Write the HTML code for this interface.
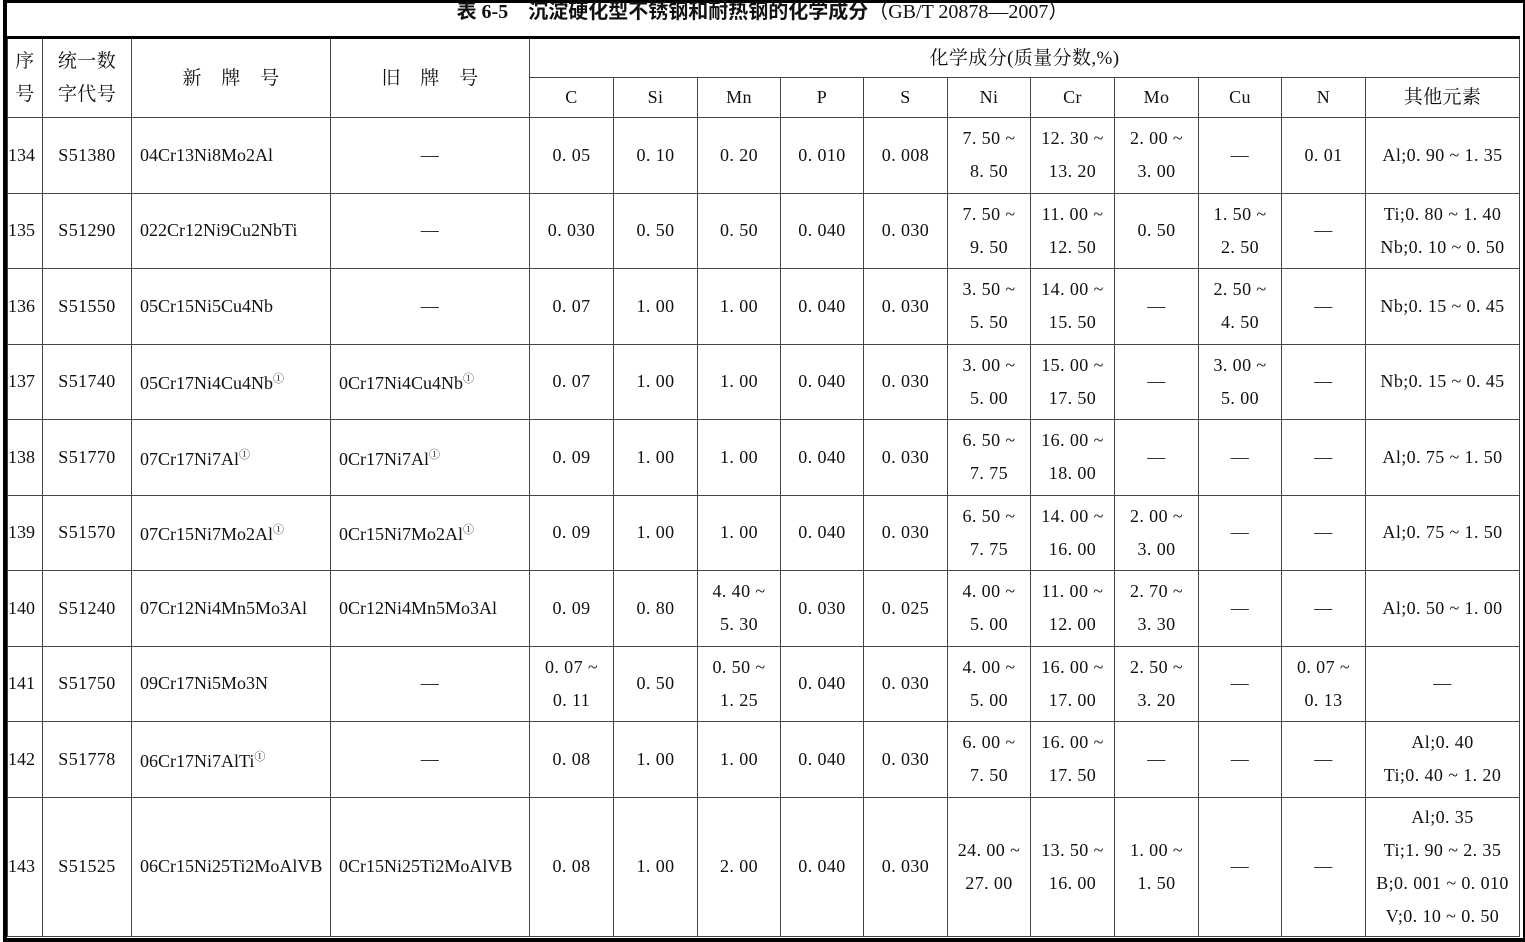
<!DOCTYPE html>
<html><head><meta charset="utf-8"><style>
body{margin:0;width:1525px;height:940px;background:#fff;overflow:hidden;position:relative;font-family:"Liberation Serif","Noto Serif CJK SC",serif;color:#111}
.frame{position:absolute;left:3px;top:0;width:1516px;height:935px;border-left:4px solid #000;border-right:4px solid #000;border-bottom:4px solid #000;border-top:3px solid #000}
.title{position:absolute;left:0;top:-3px;width:1525px;text-align:center;font-size:20px;font-weight:bold;font-family:"Liberation Serif","Noto Sans CJK SC",serif;line-height:30px}
.title span{font-weight:normal}
table{position:absolute;left:7px;top:36px;border-collapse:collapse;table-layout:fixed;font-size:18px;letter-spacing:0.4px}
td{border:1.5px solid #444;text-align:center;vertical-align:middle;padding:0;line-height:33px;white-space:nowrap}
tr.h1 td{height:38px}
tr.h2 td{height:39px}
tr.r td{height:74.5px}
tr.rl td{height:138px}
td.l{text-align:left;padding-left:8px;letter-spacing:0}
td.s{text-align:left;padding-left:0;letter-spacing:0}
td.c{font-size:19px}
table{border-top:3px solid #000}
sup{font-size:11px}
</style></head><body>
<div class="frame"></div>
<div class="title">表 6-5　沉淀硬化型不锈钢和耐热钢的化学成分<span>（GB/T 20878—2007）</span></div>
<table>
<colgroup><col style="width:35px"><col style="width:89px"><col style="width:199px"><col style="width:199px"><col style="width:84px"><col style="width:84px"><col style="width:83px"><col style="width:83px"><col style="width:84px"><col style="width:83px"><col style="width:84px"><col style="width:84px"><col style="width:83px"><col style="width:84px"><col style="width:154px"></colgroup>
<tr class="h1"><td class="c" rowspan="2" style="line-height:33px">序<br>号</td><td class="c" rowspan="2">统一数<br>字代号</td><td class="c" rowspan="2">新　牌　号</td><td class="c" rowspan="2">旧　牌　号</td><td class="c" colspan="11">化学成分(质量分数,%)</td></tr>
<tr class="h2"><td>C</td><td>Si</td><td>Mn</td><td>P</td><td>S</td><td>Ni</td><td>Cr</td><td>Mo</td><td>Cu</td><td>N</td><td class="c">其他元素</td></tr>
<tr class="r"><td class="s">134</td><td>S51380</td><td class="l">04Cr13Ni8Mo2Al</td><td>—</td><td>0. 05</td><td>0. 10</td><td>0. 20</td><td>0. 010</td><td>0. 008</td><td>7. 50 ~<br>8. 50</td><td>12. 30 ~<br>13. 20</td><td>2. 00 ~<br>3. 00</td><td>—</td><td>0. 01</td><td>Al;0. 90 ~ 1. 35</td></tr>
<tr class="r"><td class="s">135</td><td>S51290</td><td class="l">022Cr12Ni9Cu2NbTi</td><td>—</td><td>0. 030</td><td>0. 50</td><td>0. 50</td><td>0. 040</td><td>0. 030</td><td>7. 50 ~<br>9. 50</td><td>11. 00 ~<br>12. 50</td><td>0. 50</td><td>1. 50 ~<br>2. 50</td><td>—</td><td>Ti;0. 80 ~ 1. 40<br>Nb;0. 10 ~ 0. 50</td></tr>
<tr class="r"><td class="s">136</td><td>S51550</td><td class="l">05Cr15Ni5Cu4Nb</td><td>—</td><td>0. 07</td><td>1. 00</td><td>1. 00</td><td>0. 040</td><td>0. 030</td><td>3. 50 ~<br>5. 50</td><td>14. 00 ~<br>15. 50</td><td>—</td><td>2. 50 ~<br>4. 50</td><td>—</td><td>Nb;0. 15 ~ 0. 45</td></tr>
<tr class="r"><td class="s">137</td><td>S51740</td><td class="l">05Cr17Ni4Cu4Nb<sup>①</sup></td><td class="l">0Cr17Ni4Cu4Nb<sup>①</sup></td><td>0. 07</td><td>1. 00</td><td>1. 00</td><td>0. 040</td><td>0. 030</td><td>3. 00 ~<br>5. 00</td><td>15. 00 ~<br>17. 50</td><td>—</td><td>3. 00 ~<br>5. 00</td><td>—</td><td>Nb;0. 15 ~ 0. 45</td></tr>
<tr class="r"><td class="s">138</td><td>S51770</td><td class="l">07Cr17Ni7Al<sup>①</sup></td><td class="l">0Cr17Ni7Al<sup>①</sup></td><td>0. 09</td><td>1. 00</td><td>1. 00</td><td>0. 040</td><td>0. 030</td><td>6. 50 ~<br>7. 75</td><td>16. 00 ~<br>18. 00</td><td>—</td><td>—</td><td>—</td><td>Al;0. 75 ~ 1. 50</td></tr>
<tr class="r"><td class="s">139</td><td>S51570</td><td class="l">07Cr15Ni7Mo2Al<sup>①</sup></td><td class="l">0Cr15Ni7Mo2Al<sup>①</sup></td><td>0. 09</td><td>1. 00</td><td>1. 00</td><td>0. 040</td><td>0. 030</td><td>6. 50 ~<br>7. 75</td><td>14. 00 ~<br>16. 00</td><td>2. 00 ~<br>3. 00</td><td>—</td><td>—</td><td>Al;0. 75 ~ 1. 50</td></tr>
<tr class="r"><td class="s">140</td><td>S51240</td><td class="l">07Cr12Ni4Mn5Mo3Al</td><td class="l">0Cr12Ni4Mn5Mo3Al</td><td>0. 09</td><td>0. 80</td><td>4. 40 ~<br>5. 30</td><td>0. 030</td><td>0. 025</td><td>4. 00 ~<br>5. 00</td><td>11. 00 ~<br>12. 00</td><td>2. 70 ~<br>3. 30</td><td>—</td><td>—</td><td>Al;0. 50 ~ 1. 00</td></tr>
<tr class="r"><td class="s">141</td><td>S51750</td><td class="l">09Cr17Ni5Mo3N</td><td>—</td><td>0. 07 ~<br>0. 11</td><td>0. 50</td><td>0. 50 ~<br>1. 25</td><td>0. 040</td><td>0. 030</td><td>4. 00 ~<br>5. 00</td><td>16. 00 ~<br>17. 00</td><td>2. 50 ~<br>3. 20</td><td>—</td><td>0. 07 ~<br>0. 13</td><td>—</td></tr>
<tr class="r"><td class="s">142</td><td>S51778</td><td class="l">06Cr17Ni7AlTi<sup>①</sup></td><td>—</td><td>0. 08</td><td>1. 00</td><td>1. 00</td><td>0. 040</td><td>0. 030</td><td>6. 00 ~<br>7. 50</td><td>16. 00 ~<br>17. 50</td><td>—</td><td>—</td><td>—</td><td>Al;0. 40<br>Ti;0. 40 ~ 1. 20</td></tr>
<tr class="rl"><td class="s">143</td><td>S51525</td><td class="l">06Cr15Ni25Ti2MoAlVB</td><td class="l">0Cr15Ni25Ti2MoAlVB</td><td>0. 08</td><td>1. 00</td><td>2. 00</td><td>0. 040</td><td>0. 030</td><td>24. 00 ~<br>27. 00</td><td>13. 50 ~<br>16. 00</td><td>1. 00 ~<br>1. 50</td><td>—</td><td>—</td><td>Al;0. 35<br>Ti;1. 90 ~ 2. 35<br>B;0. 001 ~ 0. 010<br>V;0. 10 ~ 0. 50</td></tr>
</table>
</body></html>
